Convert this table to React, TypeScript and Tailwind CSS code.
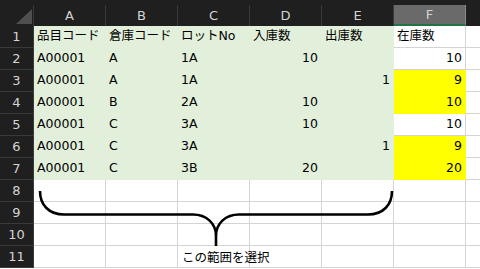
import React from "react";

// Sheet data: one entry per row, columns A-F
const ROWS: Array<Array<string | number>> = [
  ["品目コード", "倉庫コード", "ロットNo", "入庫数", "出庫数", "在庫数"],
  ["A00001", "A", "1A", 10, "", 10],
  ["A00001", "A", "1A", "", 1, 9],
  ["A00001", "B", "2A", 10, "", 10],
  ["A00001", "C", "3A", 10, "", 10],
  ["A00001", "C", "3A", "", 1, 9],
  ["A00001", "C", "3B", 20, "", 20],
];

const COLS = ["A", "B", "C", "D", "E", "F"];
const YELLOW_ROWS = [2, 3, 5, 6];
const EMPTY_ROWS = [8, 9, 10, 11];

const FONT = "font-['DejaVu_Sans','Noto_Sans_CJK_JP',sans-serif]";

function cellFill(r: number, c: number) {
  if (c < 5) return "bg-[#e2efda] border-[#e2efda]";
  if (YELLOW_ROWS.includes(r)) return "bg-[#ffff00] border-[#ffff00]";
  return "bg-white border-[#d4d4d4]";
}

export default function App() {
  return (
    <div className={`relative w-[480px] h-[269px] overflow-hidden bg-white text-[12.5px] text-black ${FONT}`}>
      {/* Column headers */}
      <div className="h-[5px] bg-[#1f1f1f]" />
      <div className="flex h-[21px] bg-[#1f1f1f] text-[13px] text-[#d4d4d4]">
        <div className="w-[34px] shrink-0 relative border-r border-[#3a3a3a]">
          <div className="absolute right-[1px] bottom-[2px] w-0 h-0 border-l-[16px] border-l-transparent border-b-[15px] border-b-[#4f4f4f]" />
        </div>
        {COLS.map((c) => (
          <div
            key={c}
            className={`w-[72px] shrink-0 flex items-center justify-center border-r ${
              c === "F"
                ? "bg-[#6a6a6a] border-[#8a8a8a] border-b-2 border-b-[#217346]"
                : "border-[#3a3a3a]"
            }`}
          >
            {c}
          </div>
        ))}
        <div className="flex-1" />
      </div>

      {/* Filled data rows */}
      {ROWS.map((row, r) => (
        <div key={r} className="flex h-[22px]">
          <div className="w-[34px] shrink-0 flex items-center justify-center bg-[#1f1f1f] text-[13px] text-[#d4d4d4] border-b border-r border-[#3a3a3a]">
            {r + 1}
          </div>
          {row.map((v, c) => (
            <div
              key={c}
              className={`w-[72px] shrink-0 flex items-center whitespace-nowrap border-r border-b ${cellFill(r, c)} ${
                typeof v === "number" ? "justify-end pr-[3px]" : "pl-[3px]"
              }`}
            >
              {v}
            </div>
          ))}
          <div className="flex-1 border-b border-[#d4d4d4]" />
        </div>
      ))}

      {/* Empty rows below the table */}
      {EMPTY_ROWS.map((n) => (
        <div key={n} className="flex h-[22px]">
          <div className="w-[34px] shrink-0 flex items-center justify-center bg-[#1f1f1f] text-[13px] text-[#d4d4d4] border-b border-r border-[#3a3a3a]">
            {n}
          </div>
          {COLS.map((c) => (
            <div key={c} className="w-[72px] shrink-0 border-r border-b border-[#d4d4d4]" />
          ))}
          <div className="flex-1 border-b border-[#d4d4d4]" />
        </div>
      ))}

      {/* Curly brace under the range */}
      <svg className="absolute left-0 top-0 pointer-events-none" width="480" height="269">
        <path
          d="M40 191 C40 205 49 214.5 64 214.5 L193 214.5 C206 214.5 216 223 216 236 L216 246 M392 191 C392 205 383 214.5 368 214.5 L239 214.5 C226 214.5 216 223 216 236"
          fill="none"
          stroke="#000"
          strokeWidth="2.6"
        />
      </svg>
      <div className="absolute left-[182px] top-[248px] h-[20px] flex items-center text-[12.5px] whitespace-nowrap">
        この範囲を選択
      </div>
    </div>
  );
}
